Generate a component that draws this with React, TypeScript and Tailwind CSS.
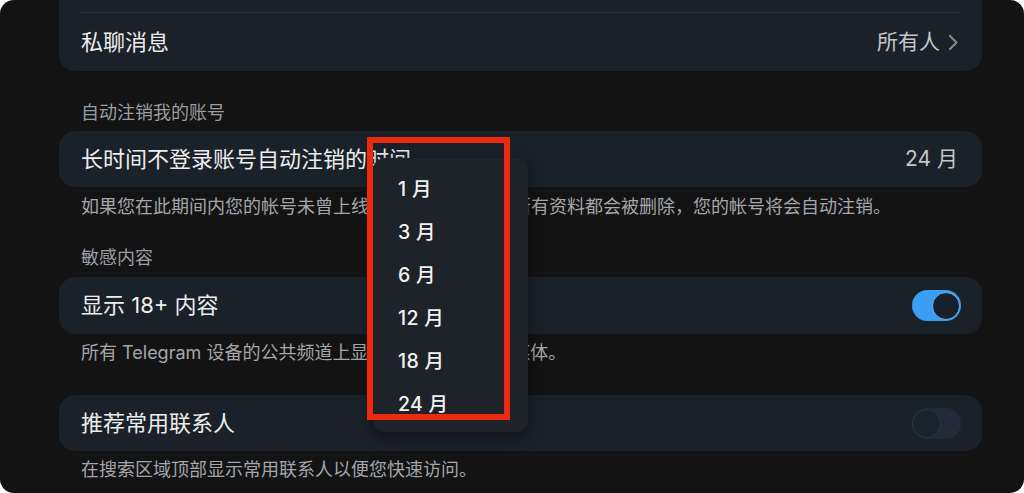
import React from "react";

/* ── pieces ── */

function Toggle({ on }: { on: boolean }) {
  if (on) {
    return (
      <div className="flex h-[31px] w-[49px] items-center justify-end rounded-full bg-[#3a9ff4] pr-[1px]">
        <div className="h-[28px] w-[28px] rounded-full border-[1.5px] border-[#5fb2f5] bg-[#18202b]" />
      </div>
    );
  }
  return (
    <div className="flex h-[31px] w-[49px] items-center rounded-full bg-[#222c38]">
      <div className="h-[29px] w-[29px] rounded-full border border-[#2a3441] bg-[#1a222c]" />
    </div>
  );
}

function Chevron() {
  return (
    <svg width="10" height="17" viewBox="0 0 10 17" fill="none">
      <path d="M2 2l6.5 6.5L2 15" stroke="#7f868e" strokeWidth="2.2" strokeLinecap="round" strokeLinejoin="round" />
    </svg>
  );
}

function SectionLabel({ text, className }: { text: string; className: string }) {
  return (
    <div className={`h-[24px] px-[22px] text-[18px] leading-[24px] text-[#9a9da2] ${className}`}>
      {text}
    </div>
  );
}

function Note({ text, className }: { text: string; className: string }) {
  return (
    <div className={`h-[24px] whitespace-nowrap px-[22px] text-[18px] leading-[24px] text-[#a3a6ab] ${className}`}>
      {text}
    </div>
  );
}

const months = ["1 月", "3 月", "6 月", "12 月", "18 月", "24 月"];

export default function App() {
  return (
    <div className="h-[493px] w-[1024px] bg-white">
      <div className="relative h-full w-full overflow-hidden rounded-[14px] bg-[#131313] font-['Inter','Noto_Sans_CJK_SC',sans-serif]">
        <div className="flex flex-col pl-[59px] pr-[42px]">
          {/* 隐私设置卡片（上半部分在屏幕外） */}
          <div className="mt-[-44px] rounded-[16px] bg-[#1a2129]">
            <div className="h-[56px]" />
            <div className="mx-[21px] h-px bg-[#28313a]" />
            <div className="flex h-[58px] items-center justify-between pl-[22px] pr-[24px]">
              <span className="text-[22px] text-[#ededed]">私聊消息</span>
              <span className="flex items-center gap-[8px] text-[21px] text-[#c3c7cc]">
                所有人
                <Chevron />
              </span>
            </div>
          </div>

          <SectionLabel text="自动注销我的账号" className="mt-[30px]" />
          <div className="mt-[6px] flex h-[56px] items-center justify-between rounded-[16px] bg-[#1a2129] pl-[22px] pr-[24px]">
            <span className="text-[22px] text-[#ededed]">长时间不登录账号自动注销的时间</span>
            <span className="text-[21px] text-[#c3c7cc]">24 月</span>
          </div>
          <Note
            text="如果您在此期间内您的帐号未曾上线，您的帐号及其中所有资料都会被删除，您的帐号将会自动注销。"
            className="mt-[8px]"
          />

          <SectionLabel text="敏感内容" className="mt-[27px]" />
          <div className="mt-[7px] flex h-[57px] items-center justify-between rounded-[16px] bg-[#1a2129] pl-[22px] pr-[21px]">
            <span className="text-[22px] text-[#ededed]">显示 18+ 内容</span>
            <Toggle on />
          </div>
          <Note text="所有 Telegram 设备的公共频道上显示包含成人内容的媒体。" className="mt-[7px]" />

          <div className="mt-[30px] flex h-[56px] items-center justify-between rounded-[16px] bg-[#1a2129] pl-[22px] pr-[21px]">
            <span className="text-[22px] text-[#ededed]">推荐常用联系人</span>
            <Toggle on={false} />
          </div>
          <Note text="在搜索区域顶部显示常用联系人以便您快速访问。" className="mt-[7px]" />
        </div>

        {/* 下拉菜单 */}
        <div className="absolute left-[373px] top-[158px] h-[274px] w-[155px] overflow-hidden rounded-[12px] bg-[#1e232a] pt-[10px] shadow-[0_4px_16px_rgba(0,0,0,0.45)]">
          {months.map((m) => (
            <div key={m} className="flex h-[43px] items-center pl-[25px] text-[19.5px] font-medium tracking-[0.3px] text-[#f2f2f2]">
              {m}
            </div>
          ))}
        </div>

        {/* 标注框 */}
        <div className="absolute left-[367px] top-[137px] h-[283px] w-[143px] border-[6px] border-[#ec2a10]" />
      </div>
    </div>
  );
}
